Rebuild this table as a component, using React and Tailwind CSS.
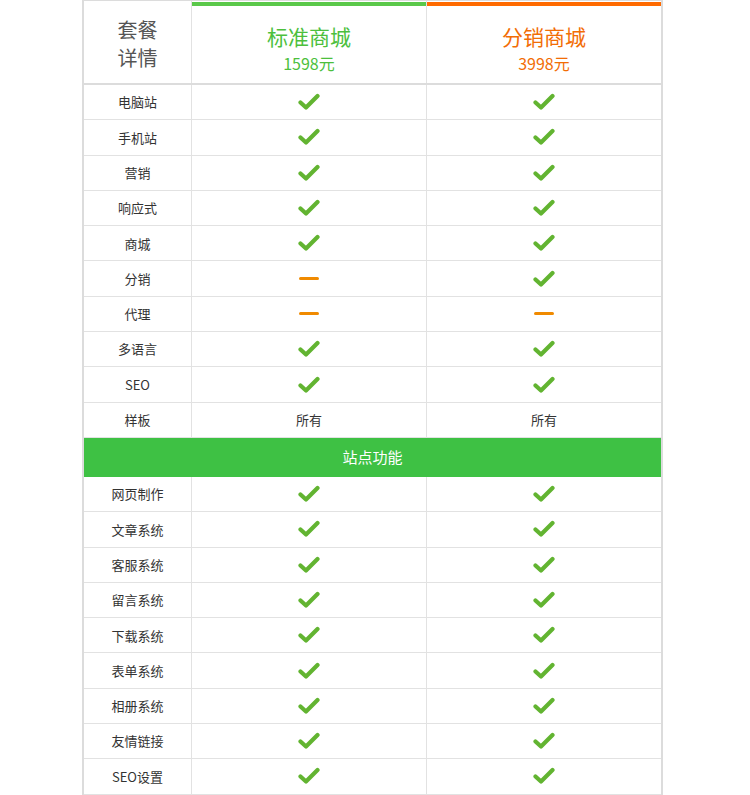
import React from 'react';

const Check = () => (
  <svg width="22" height="18" viewBox="0 0 22 18" className="block">
    <path
      d="M2.5 9.5 L8 14.5 L19.5 3"
      fill="none"
      stroke="#62b431"
      strokeWidth="4.2"
      strokeLinecap="round"
      strokeLinejoin="round"
    />
  </svg>
);

const Dash = () => <div className="w-[20px] h-[3px] rounded-full bg-[#f08a00]" />;

const basicRows = [
  ['电脑站', 'y', 'y'],
  ['手机站', 'y', 'y'],
  ['营销', 'y', 'y'],
  ['响应式', 'y', 'y'],
  ['商城', 'y', 'y'],
  ['分销', 'n', 'y'],
  ['代理', 'n', 'n'],
  ['多语言', 'y', 'y'],
  ['SEO', 'y', 'y'],
  ['样板', '所有', '所有'],
];

const siteRows = [
  '网页制作',
  '文章系统',
  '客服系统',
  '留言系统',
  '下载系统',
  '表单系统',
  '相册系统',
  '友情链接',
  'SEO设置',
].map((name) => [name, 'y', 'y']);

const Mark = ({ v }) => {
  if (v === 'y') return <Check />;
  if (v === 'n') return <Dash />;
  return <span className="text-[13px] text-[#333]">{v}</span>;
};

const Row = ({ row }) => (
  <div className="grid grid-cols-[108px_235px_234px] h-[35.3px]">
    <div className="flex items-center justify-center border-r border-b border-[#e2e2e2] text-[13px] text-[#333]">
      {row[0]}
    </div>
    <div className="flex items-center justify-center border-r border-b border-[#e2e2e2]">
      <Mark v={row[1]} />
    </div>
    <div className="flex items-center justify-center border-b border-[#e2e2e2]">
      <Mark v={row[2]} />
    </div>
  </div>
);

export default function App() {
  return (
    <div className="w-[750px] h-[795px] bg-white overflow-hidden font-['Noto_Sans_CJK_SC','Liberation_Sans',sans-serif]">
      <div className="ml-[82px] w-[581px] border-l-2 border-r-2 border-t border-[#dcdcdc]">
        {/* header */}
        <div className="grid grid-cols-[108px_235px_234px] h-[84px] border-b-2 border-[#dcdcdc]">
          <div className="flex flex-col items-center gap-[2px] pt-[16px] border-r border-[#e2e2e2] text-[20px] leading-[26px] text-[#555]">
            <span className="h-[26px]">套餐</span>
            <span className="h-[26px]">详情</span>
          </div>
          <div className="flex flex-col border-r border-[#e2e2e2]">
            <div className="mt-[1px] h-[4px] bg-[#5ac84a]" />
            <div className="flex flex-col items-center pt-[16px] text-[#4cbf3d]">
              <span className="h-[28px] text-[21px] leading-[28px]">标准商城</span>
              <span className="h-[26px] text-[16px] leading-[26px]">1598元</span>
            </div>
          </div>
          <div className="flex flex-col">
            <div className="mt-[1px] h-[4px] bg-[#ff6a00]" />
            <div className="flex flex-col items-center pt-[16px] text-[#f26d05]">
              <span className="h-[28px] text-[21px] leading-[28px]">分销商城</span>
              <span className="h-[26px] text-[16px] leading-[26px]">3998元</span>
            </div>
          </div>
        </div>

        {basicRows.map((r) => (
          <Row key={r[0]} row={r} />
        ))}

        <div className="h-[39px] bg-[#3ec144] flex items-center justify-center text-white text-[15px]">
          站点功能
        </div>

        {siteRows.map((r) => (
          <Row key={r[0]} row={r} />
        ))}
      </div>
    </div>
  );
}
